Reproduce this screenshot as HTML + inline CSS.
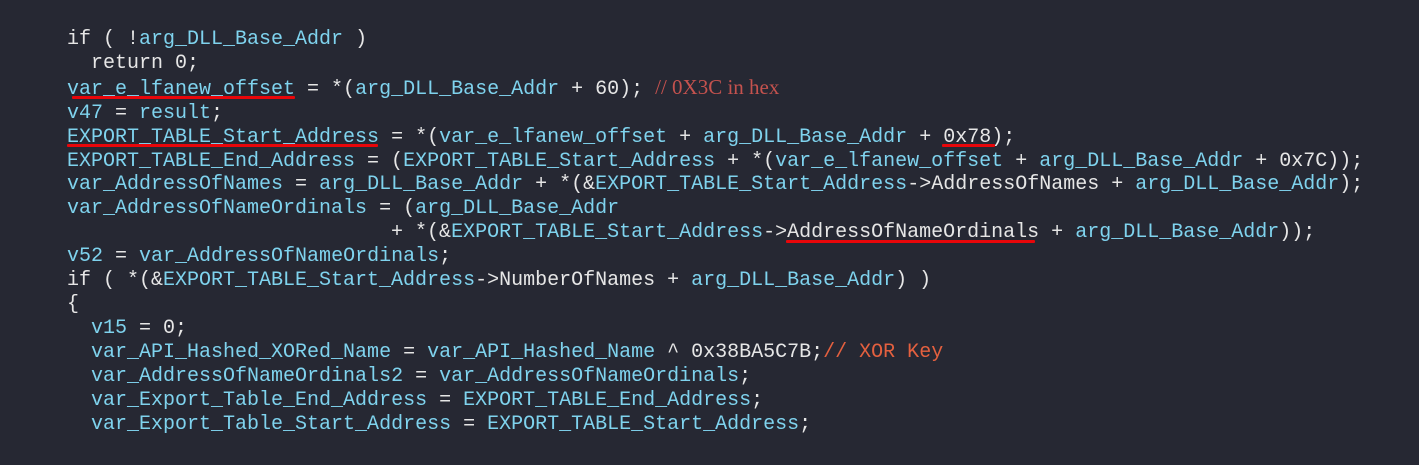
<!DOCTYPE html>
<html><head><style>
html,body{margin:0;padding:0;background:#262833;width:1419px;height:465px;overflow:hidden}
pre{position:absolute;left:67px;top:28px;margin:0;font-family:"Liberation Mono",monospace;font-size:20px;line-height:23.9px;color:#e6e6e6;letter-spacing:0}
.v{color:#7fd3ee}
.c{color:#e4603f}
.s{font-family:"Liberation Serif",serif;color:#c4524e;font-size:21px}
.u{position:absolute;height:3px;background:#e8060a;border-radius:1px}
</style></head><body>
<pre>if ( !<span class="v">arg_DLL_Base_Addr</span> )
  return 0;
<span class="v">var_e_lfanew_offset</span> = *(<span class="v">arg_DLL_Base_Addr</span> + 60); <span class="s">// 0X3C in hex</span>
<span class="v">v47</span> = <span class="v">result</span>;
<span class="v">EXPORT_TABLE_Start_Address</span> = *(<span class="v">var_e_lfanew_offset</span> + <span class="v">arg_DLL_Base_Addr</span> + 0x78);
<span class="v">EXPORT_TABLE_End_Address</span> = (<span class="v">EXPORT_TABLE_Start_Address</span> + *(<span class="v">var_e_lfanew_offset</span> + <span class="v">arg_DLL_Base_Addr</span> + 0x7C));
<span class="v">var_AddressOfNames</span> = <span class="v">arg_DLL_Base_Addr</span> + *(&amp;<span class="v">EXPORT_TABLE_Start_Address</span>-&gt;AddressOfNames + <span class="v">arg_DLL_Base_Addr</span>);
<span class="v">var_AddressOfNameOrdinals</span> = (<span class="v">arg_DLL_Base_Addr</span>
                           + *(&amp;<span class="v">EXPORT_TABLE_Start_Address</span>-&gt;AddressOfNameOrdinals + <span class="v">arg_DLL_Base_Addr</span>));
<span class="v">v52</span> = <span class="v">var_AddressOfNameOrdinals</span>;
if ( *(&amp;<span class="v">EXPORT_TABLE_Start_Address</span>-&gt;NumberOfNames + <span class="v">arg_DLL_Base_Addr</span>) )
{
  <span class="v">v15</span> = 0;
  <span class="v">var_API_Hashed_XORed_Name</span> = <span class="v">var_API_Hashed_Name</span> ^ 0x38BA5C7B;<span class="c">// XOR Key</span>
  <span class="v">var_AddressOfNameOrdinals2</span> = <span class="v">var_AddressOfNameOrdinals</span>;
  <span class="v">var_Export_Table_End_Address</span> = <span class="v">EXPORT_TABLE_End_Address</span>;
  <span class="v">var_Export_Table_Start_Address</span> = <span class="v">EXPORT_TABLE_Start_Address</span>;
</pre>
<div class="u" style="left:72px;top:96px;width:223px"></div>
<div class="u" style="left:67px;top:144px;width:311px"></div>
<div class="u" style="left:942px;top:144px;width:53px"></div>
<div class="u" style="left:786px;top:240px;width:249px"></div>
</body></html>
